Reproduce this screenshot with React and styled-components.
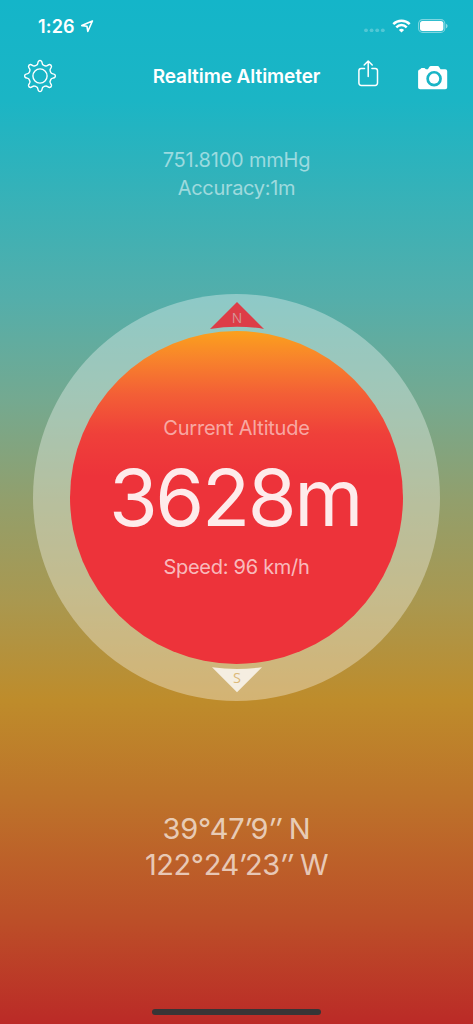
import React from 'react';
import styled, { createGlobalStyle } from 'styled-components';

const GlobalStyle = createGlobalStyle`
  * { box-sizing: border-box; }
  body { margin: 0; }
`;

const Screen = styled.main`
  width: 473px;
  height: 1024px;
  display: flex;
  flex-direction: column;
  overflow: hidden;
  color: #fff;
  font-family: Inter, "Liberation Sans", sans-serif;
  background: linear-gradient(180deg, #14b5c9 0, #1bb5c5 100px, #54aeaa 300px, #74a990 400px, #929f6c 500px, #a99850 600px, #be8c2b 700px, #bd722a 800px, #bc4f28 920px, #bb2a27 1024px);
`;

const StatusBar = styled.header`
  height: 52px;
  padding: 0 25px 0 38px;
  display: flex;
  align-items: center;
  justify-content: space-between;
`;

const Group = styled.div`
  display: flex;
  align-items: center;
  gap: ${(p) => p.$gap}px;
`;

const Clock = styled.time`
  padding-top: 1px;
  font-size: 18px;
  line-height: 22px;
  font-weight: 600;
  letter-spacing: 0.15px;
`;

const NavBar = styled.nav`
  height: 48px;
  padding: 0 25px 0 23px;
  display: grid;
  grid-template-columns: 111px 205px 1fr auto;
  align-items: center;
`;

const IconButton = styled.button`
  display: flex;
  justify-self: start;
  padding: 0;
  margin: ${(p) => p.$margin || '0'};
  border: 0;
  background: none;
  color: inherit;
`;

const Title = styled.h1`
  margin: 0;
  padding-top: 1px;
  justify-self: center;
  font-size: 19px;
  line-height: 24px;
  font-weight: 600;
  letter-spacing: -0.07px;
  white-space: nowrap;
`;

const Readout = styled.section`
  height: 194px;
  padding-top: 46px;
  display: flex;
  flex-direction: column;
  align-items: center;
`;

const Line = styled.p`
  margin: 0;
  font-size: ${(p) => p.$size}px;
  line-height: ${(p) => p.$height}px;
  font-weight: 400;
  letter-spacing: ${(p) => p.$tracking || 0}px;
  color: rgba(255, 255, 255, ${(p) => p.$alpha});
  white-space: nowrap;
`;

const Prime = styled.span`
  font-style: italic;
`;

const Ring = styled.section`
  width: 407px;
  height: 407px;
  margin: 0 0 0 33px;
  flex: none;
  border-radius: 50%;
  background: rgba(255, 255, 255, 0.34);
  display: flex;
  flex-direction: column;
  align-items: center;
`;

const PointerSlot = styled.div`
  height: 37px;
  padding-top: ${(p) => p.$top}px;
  svg { display: block; }
`;

const Disc = styled.div`
  width: 333px;
  height: 333px;
  flex: none;
  border-radius: 50%;
  padding-top: 83px;
  background: linear-gradient(180deg, #fba01d 0, #f8842b 27px, #f35f36 63px, #ef403a 103px, #ed333a 145px, #ed333a 100%);
  display: flex;
  flex-direction: column;
  align-items: center;
`;

const Altitude = styled.strong`
  display: block;
  height: 110px;
  margin-top: 1px;
  padding-right: 3px;
  font-size: 79px;
  line-height: 108px;
  font-weight: 400;
  letter-spacing: -2.4px;
  color: rgba(255, 255, 255, 0.9);
`;

const Coordinates = styled.section`
  margin-top: 110px;
  display: flex;
  flex-direction: column;
  align-items: center;
`;

const HomeIndicator = styled.div`
  width: 169px;
  height: 6px;
  margin: auto auto 9px 152px;
  flex: none;
  border-radius: 3px;
  background: #373536;
`;

const gearPath = (() => {
  const at = (deg, r) => {
    const a = (deg * Math.PI) / 180;
    return `${(17 + r * Math.sin(a)).toFixed(2)} ${(17 - r * Math.cos(a)).toFixed(2)}`;
  };
  let d = `M${at(-5, 15)}`;
  for (let i = 0; i < 8; i += 1) {
    const a = i * 45;
    d += `Q${at(a, 15.9)} ${at(a + 5, 15)}`;
    d += `C${at(a + 10, 14.2)} ${at(a + 9, 12)} ${at(a + 15, 11.6)}`;
    d += `C${at(a + 20, 11.2)} ${at(a + 25, 11.2)} ${at(a + 30, 11.6)}`;
    d += `C${at(a + 36, 12)} ${at(a + 35, 14.2)} ${at(a + 40, 15)}`;
  }
  return `${d}Z`;
})();

const GearIcon = () => (
  <svg width="34" height="34" viewBox="0 0 34 34" fill="none" stroke="currentColor" strokeWidth="1.4">
    <path d={gearPath} />
    <circle cx="17" cy="17" r="7.1" />
  </svg>
);

const LocationIcon = () => (
  <svg width="13" height="13" viewBox="0 0 13 13" fill="none" stroke="currentColor" strokeWidth="1.6" strokeLinejoin="round">
    <path d="M11.4 1 .8 5.6l5.2.7.8 5.2z" />
  </svg>
);

const SignalDots = () => (
  <svg width="22" height="12" viewBox="0 0 22 12" fill="#fff" opacity=".25">
    {[3, 8.6, 14.2, 19.8].map((x) => <circle key={x} cx={x} cy="10.3" r="1.9" />)}
  </svg>
);

const WifiIcon = () => (
  <svg width="19" height="14" viewBox="0 0 19 14" fill="none" stroke="#fff" strokeWidth="2.5">
    <path d="M1.3 5.1a11.7 11.7 0 0 1 16.4 0" />
    <path d="M4.3 8.3a7.3 7.3 0 0 1 10.4 0" />
    <path d="M6.9 10.9a3.8 3.8 0 0 1 5.2 0L9.5 13.6z" fill="#fff" stroke="none" />
  </svg>
);

const BatteryIcon = () => (
  <svg width="30" height="14" viewBox="0 0 30 14">
    <rect x=".6" y=".6" width="26.2" height="12.8" rx="4" fill="none" stroke="#fff" strokeOpacity=".45" strokeWidth="1.1" />
    <rect x="2" y="2" width="23.4" height="10" rx="2.5" fill="#fff" />
    <path d="M28 4.7c2.1.8 2.1 3.8 0 4.6z" fill="#fff" fillOpacity=".5" />
  </svg>
);

const ShareIcon = () => (
  <svg width="21" height="27" viewBox="0 0 21 27" fill="none" stroke="currentColor" strokeWidth="1.5" strokeLinecap="round" strokeLinejoin="round">
    <path d="M6.5 8.5H3.2A2.3 2.3 0 0 0 .9 10.8v12.3a2.3 2.3 0 0 0 2.3 2.3h14a2.3 2.3 0 0 0 2.3-2.3V10.8a2.3 2.3 0 0 0-2.3-2.3h-3.3" />
    <path d="M10.2 16.5V1M6.2 5l4-4 4 4" />
  </svg>
);

const CameraIcon = () => (
  <svg width="30" height="24" viewBox="0 0 30 24">
    <path fill="#fff" fillRule="evenodd" d="M2.2 3.2 3.5 2.1h3l1.4 1.2h2l1.2-2.1Q11.8.1 13 .1h6.5q1.2 0 1.8 1.1l1.2 2.1h4.7q2 0 2 2v16.1q0 1.8-2 1.8H2.1q-2 0-2-1.8V5.2q0-1.5 2.1-2zM16.1 4.9a7.8 7.8 0 1 0 0 15.6 7.8 7.8 0 0 0 0-15.6z" />
    <circle cx="16.1" cy="12.7" r="5.1" fill="#fff" />
  </svg>
);

const NorthPointer = () => (
  <svg width="54" height="28" viewBox="0 0 54 28">
    <path d="M27 0 54 27Q27 22.4 0 27z" fill="#dd3d47" />
    <text x="27" y="20.5" textAnchor="middle" fontFamily="Open Sans, sans-serif" fontSize="14.5" textLength="10.5" lengthAdjust="spacingAndGlyphs" fill="#d59798">N</text>
  </svg>
);

const SouthPointer = () => (
  <svg width="50" height="26" viewBox="0 0 50 26">
    <path d="M0 .2Q25 3.6 50 .2L25 25.2z" fill="#f5eee1" />
    <text x="25" y="16" textAnchor="middle" fontFamily="Open Sans, sans-serif" fontSize="14.5" fill="#dcb979">S</text>
  </svg>
);

export default function App() {
  return (
    <Screen>
      <GlobalStyle />
      <StatusBar>
        <Group $gap={6}>
          <Clock>1:26</Clock>
          <LocationIcon />
        </Group>
        <Group $gap={7}>
          <SignalDots />
          <WifiIcon />
          <BatteryIcon />
        </Group>
      </StatusBar>
      <NavBar>
        <IconButton aria-label="Settings"><GearIcon /></IconButton>
        <Title>Realtime Altimeter</Title>
        <IconButton aria-label="Share" $margin="0 0 5px 19px"><ShareIcon /></IconButton>
        <IconButton aria-label="Camera" $margin="4px 0 0"><CameraIcon /></IconButton>
      </NavBar>
      <Readout>
        <Line $size={20} $height={28} $tracking={-0.2} $alpha={0.53}>751.8100 mmHg</Line>
        <Line $size={20} $height={28} $tracking={-0.3} $alpha={0.53}>Accuracy:1m</Line>
      </Readout>
      <Ring>
        <PointerSlot $top={8}><NorthPointer /></PointerSlot>
        <Disc>
          <Line $size={20} $height={28} $tracking={-0.2} $alpha={0.55}>Current Altitude</Line>
          <Altitude>3628m</Altitude>
          <Line $size={20} $height={28} $tracking={-0.27} $alpha={0.68}>Speed: 96 km/h</Line>
        </Disc>
        <PointerSlot $top={3}><SouthPointer /></PointerSlot>
      </Ring>
      <Coordinates>
        <Line $size={29} $height={36} $tracking={-0.25} $alpha={0.68}>39°47<Prime>′</Prime>9<Prime>″</Prime> N</Line>
        <Line $size={29} $height={36} $tracking={-0.4} $alpha={0.68}>122°24<Prime>′</Prime>23<Prime>″</Prime> W</Line>
      </Coordinates>
      <HomeIndicator />
    </Screen>
  );
}
